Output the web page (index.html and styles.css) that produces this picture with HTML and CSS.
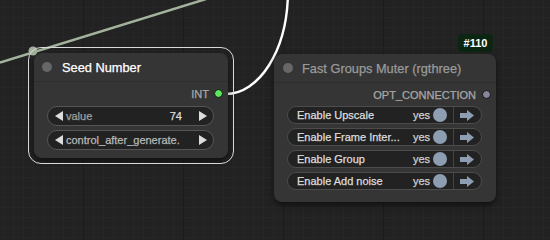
FILE: index.html
```html
<!DOCTYPE html>
<html>
<head>
<meta charset="utf-8">
<link rel="stylesheet" href="styles.css">
</head>
<body>
<div class="canvas">
  <svg class="links" width="550" height="240" viewBox="0 0 550 240">
    <line x1="0" y1="62.5" x2="206" y2="-1" stroke="#a3b29c" stroke-width="2.4"/>
    <circle cx="33" cy="51" r="4.5" fill="#a3b29c"/>
    <path d="M 226 94 C 258 94, 288 52, 288 -10" fill="none" stroke="#ffffff" stroke-width="2.4"/>
  </svg>

  <div class="node seed selected">
    <div class="title"><span class="tdot"></span><span class="ttext">Seed Number</span></div>
    <div class="body">
      <div class="slot-out"><span class="slabel">INT</span><span class="sdot green"></span></div>
      <div class="widget">
        <svg class="tri" width="8" height="10" viewBox="0 0 8 10"><path d="M8 0 L0 5 L8 10 Z" fill="#ddd"/></svg>
        <span class="wlabel">value</span>
        <span class="wval">74</span>
        <svg class="tri" width="8" height="10" viewBox="0 0 8 10"><path d="M0 0 L8 5 L0 10 Z" fill="#ddd"/></svg>
      </div>
      <div class="widget">
        <svg class="tri" width="8" height="10" viewBox="0 0 8 10"><path d="M8 0 L0 5 L8 10 Z" fill="#ddd"/></svg>
        <span class="wlabel light">control_after_generate.</span>
        <span class="wval"></span>
        <svg class="tri" width="8" height="10" viewBox="0 0 8 10"><path d="M0 0 L8 5 L0 10 Z" fill="#ddd"/></svg>
      </div>
    </div>
  </div>

  <div class="badge">#110</div>

  <div class="node muter">
    <div class="title"><span class="tdot"></span><span class="ttext dim">Fast Groups Muter (rgthree)</span></div>
    <div class="body">
      <div class="slot-out"><span class="slabel">OPT_CONNECTION</span><span class="sdot gray"></span></div>
      <div class="toggle"><span class="tlabel">Enable Upscale</span><span class="yes">yes</span><span class="knob"></span><span class="go"><svg width="14" height="11" viewBox="0 0 14 11"><path d="M0 3 H7 V0 L14 5.5 L7 11 V8 H0 Z" fill="#8d9db2"/></svg></span></div>
      <div class="toggle"><span class="tlabel">Enable Frame Inter...</span><span class="yes">yes</span><span class="knob"></span><span class="go"><svg width="14" height="11" viewBox="0 0 14 11"><path d="M0 3 H7 V0 L14 5.5 L7 11 V8 H0 Z" fill="#8d9db2"/></svg></span></div>
      <div class="toggle"><span class="tlabel">Enable Group</span><span class="yes">yes</span><span class="knob"></span><span class="go"><svg width="14" height="11" viewBox="0 0 14 11"><path d="M0 3 H7 V0 L14 5.5 L7 11 V8 H0 Z" fill="#8d9db2"/></svg></span></div>
      <div class="toggle"><span class="tlabel">Enable Add noise</span><span class="yes">yes</span><span class="knob"></span><span class="go"><svg width="14" height="11" viewBox="0 0 14 11"><path d="M0 3 H7 V0 L14 5.5 L7 11 V8 H0 Z" fill="#8d9db2"/></svg></span></div>
    </div>
  </div>
</div>
</body>
</html>
```

FILE: styles.css
```css
html, body {
  margin: 0;
  padding: 0;
  background: #222222;
}

body {
  width: 550px;
  height: 240px;
  overflow: hidden;
  font-family: "Liberation Sans", Arial, sans-serif;
}

.canvas {
  position: relative;
  width: 550px;
  height: 240px;
  background-color: #222222;
  background-image:
    linear-gradient(to right, #1c1c1c 1px, transparent 1px),
    linear-gradient(to right, #262626 1px, transparent 1px),
    linear-gradient(to bottom, #262626 1px, transparent 1px);
  background-size: 100px 100px, 10px 10px, 10px 10px;
  background-position: 83px 0, 3px 0, 0 7px;
}

.links {
  position: absolute;
  left: 0;
  top: 0;
}

.node {
  position: absolute;
  background: #353535;
  border-radius: 8px;
  box-shadow: 0 3px 6px rgba(0, 0, 0, 0.55);
  box-sizing: border-box;
  -webkit-text-stroke: 0.25px currentColor;
}

.seed {
  left: 34px;
  top: 53px;
  width: 194px;
  height: 105px;
}

.selected::before {
  content: "";
  position: absolute;
  left: -6px;
  top: -6px;
  right: -6px;
  bottom: -6px;
  border: 1.5px solid #d8d8d8;
  border-radius: 13px;
  pointer-events: none;
}

.muter {
  left: 274px;
  top: 54px;
  width: 222px;
  height: 148px;
}

.title {
  height: 28px;
  display: flex;
  align-items: center;
  gap: 10px;
  padding-left: 8px;
  border-bottom: 1px solid #2e2e2e;
  font-size: 12.8px;
  color: #ffffff;
}

.muter .title {
  padding-left: 9px;
  gap: 9px;
}

.tdot {
  width: 10px;
  height: 10px;
  border-radius: 50%;
  background: #676767;
  flex: none;
}

.ttext.dim {
  color: #9a9a9a;
}

.body {
  padding-top: 2px;
  display: flex;
  flex-direction: column;
}

.slot-out {
  height: 19px;
  display: flex;
  align-items: center;
  justify-content: flex-end;
  gap: 5px;
  padding-right: 5px;
  font-size: 11px;
  color: #a8a8a8;
}

.muter .slot-out {
  padding-right: 5px;
  gap: 6px;
}

.sdot {
  width: 7px;
  height: 7px;
  border-radius: 50%;
  border: 1px solid #111;
  flex: none;
}

.sdot.green {
  background: #5ee65e;
}

.sdot.gray {
  background: #8a8598;
}

.widget {
  margin: 3px 14px 0 13px;
  height: 18px;
  border: 1px solid #555555;
  border-radius: 10px;
  background: #222222;
  display: flex;
  align-items: center;
  padding: 0 6px 0 7px;
  font-size: 11px;
}

.widget + .widget {
  margin-top: 4px;
}

.tri {
  flex: none;
}

.wlabel {
  color: #a0a0a0;
  margin-left: 3px;
  white-space: nowrap;
}

.wlabel.light {
  color: #b8b8b8;
}

.wval {
  flex: 1;
  text-align: right;
  color: #dddddd;
  margin-right: 17px;
}

.badge {
  position: absolute;
  left: 458px;
  top: 34px;
  width: 35px;
  height: 18px;
  border-radius: 4px;
  background: #0d2613;
  color: #ffffff;
  font-size: 11px;
  font-weight: bold;
  display: flex;
  align-items: center;
  justify-content: center;
}

.toggle {
  margin: 2px 14px 0 13px;
  height: 18px;
  border: 1px solid #4c4c4c;
  border-radius: 10px;
  background: #222222;
  display: flex;
  align-items: center;
  padding-left: 9px;
  font-size: 11px;
  color: #dddddd;
  box-sizing: border-box;
}

.toggle + .toggle {
  margin-top: 4px;
}

.tlabel {
  flex: 1;
  white-space: nowrap;
}

.yes {
  color: #d0d0d0;
}

.knob {
  width: 14px;
  height: 14px;
  border-radius: 50%;
  background: #8d9db2;
  margin-left: 3px;
  margin-right: 6px;
  flex: none;
}

.go {
  width: 26px;
  height: 16px;
  border-left: 1px solid #444444;
  display: flex;
  align-items: center;
  justify-content: center;
  padding-right: 1px;
  flex: none;
}
```
